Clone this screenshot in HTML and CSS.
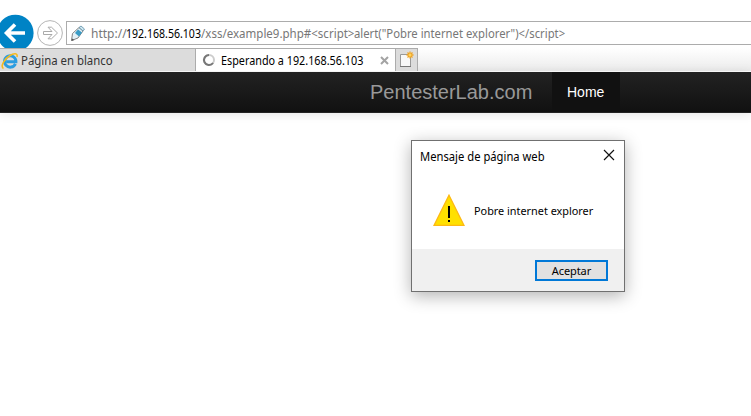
FILE: index.html
```
<!DOCTYPE html>
<html lang="es">
<head>
<meta charset="utf-8">
<title>PentesterLab.com</title>
<link rel="stylesheet" href="styles.css">
</head>
<body>
<header class="toolbar">
  <svg class="nav-buttons" width="66" height="36" viewBox="0 0 66 36">
    <circle cx="15.3" cy="19" r="18.3" fill="#0083c5"/>
    <path d="M25 19H7M15 10.5L6.5 19L15 27.5" fill="none" stroke="#fff" stroke-width="3.6"/>
    <circle cx="50" cy="19" r="12.4" fill="#fff" stroke="#b5b5b5"/>
    <path d="M43.5 17.5H52L48 13.2H51.5L57.5 19L51.500 24.800H48L52 20.500H43.500Z" fill="#fff" stroke="#aaa"/>
  </svg>
  <div class="address">
    <svg class="pencil" width="16" height="18" viewBox="0 0 16 18">
      <path d="M1.500 15.500L2.500 8.500L9 2.500L13 6L8 13Z" fill="#e3f1f7" stroke="#777" stroke-width=".9"/>
      <path d="M5 8L9 11.500L12 7.500L8 4.500Z" fill="#399bc5"/>
      <path d="M9 2.500L11 1L14.500 4L13 6Z" fill="#cde6f0" stroke="#5c8da5" stroke-width=".8"/>
      <path d="M1.500 16L2 13.500L4.500 15Z" fill="#555"/>
    </svg>
    <span class="url"><span class="scheme">http://</span><span class="host">192.168.56.103</span><span class="path">/xss/example9.php#&lt;script&gt;</span><span class="query">alert("Pobre internet explorer")&lt;/script&gt;</span></span>
  </div>
</header>
<div class="tabs">
  <div class="tab">
    <svg width="18" height="18" viewBox="0 0 18 18">
      <path d="M14.4 11.8A5.7 5.7 0 1 1 14.9 9.7H5.2" fill="none" stroke="#2b9de0" stroke-width="3"/>
      <path d="M2.5 16.5C-1 15 3 7 9 3.5C13 .8 17 1 16 5" fill="none" stroke="#f5b91e" stroke-width="1.6"/>
    </svg>
    <span class="label first">Página en blanco</span>
  </div>
  <div class="tab active">
    <svg class="spinner" width="14" height="14" viewBox="0 0 14 14">
      <circle cx="7" cy="7" r="5" fill="none" stroke="#ccc" stroke-width="2"/>
      <path d="M11 10A5 5 0 1 1 7 2" fill="none" stroke="#777" stroke-width="2"/>
    </svg>
    <span class="label second">Esperando a 192.168.56.103</span>
    <svg class="close-tab" width="9" height="9" viewBox="0 0 9 9"><path d="M1 1L8 8M8 1L1 8" stroke="#a3a3a3" stroke-width="2"/></svg>
  </div>
  <div class="new-tab">
    <svg width="20" height="20" viewBox="0 0 20 20">
      <path d="M4.500 5.500H14.500V17.500H4.500Z" fill="#f8f8f8" stroke="#999"/>
      <path d="M4 17.500H15" stroke="#777"/>
      <path d="M14 2.500V9.500M10.500 6H17.500M11.500 3.500L16.500 8.500M16.500 3.500L11.500 8.500" stroke="#f0a322" stroke-width="1.300"/>
      <circle cx="14" cy="6" r="1.500" fill="#ffd35a"/>
    </svg>
  </div>
</div>
<nav class="navbar">
  <span class="brand">PentesterLab.com</span>
  <span class="home">Home</span>
</nav>
<section class="dialog">
  <div class="title"><span class="title-text">Mensaje de página web</span>
    <svg width="12" height="12" viewBox="0 0 12 12"><path d="M1 1L11 11M11 1L1 11" stroke="#111" stroke-width="1.150"/></svg>
  </div>
  <div class="message">
    <svg width="32" height="33" viewBox="0 0 32 33">
      <path d="M16 1.200L31 31.400H1Z" fill="#ffe000" stroke="#fdb913" stroke-width="1.300"/>
      <path d="M15 12H17V24H15ZM15 26H17V28H15Z" fill="#000"/>
    </svg>
    <span class="message-text">Pobre internet explorer</span>
  </div>
  <div class="actions"><button class="accept"><span>Aceptar</span></button></div>
</section>
</body>
</html>
```

FILE: styles.css
```
* { box-sizing: border-box; }
body {
  margin: 0;
  height: 416px;
  overflow: hidden;
  background: #fff;
  font: 12px/16px "Noto Sans", "Open Sans", sans-serif;
  color: #000;
}
svg { display: block; flex: none; }
span { white-space: nowrap; transform-origin: 0 50%; }
.toolbar { display: flex; height: 48px; padding-top: 14px; overflow: hidden; }
.address {
  display: flex;
  flex: 1;
  height: 24px;
  margin-top: 7px;
  padding: 3px 0 0 3px;
  border: 1px solid #acacac;
  border-right: 0;
}
.url { display: flex; margin-left: 5px; line-height: 18px; color: #777; }
.scheme { width: 35px; }
.host { width: 75px; color: #000; transform: scaleX(.88); }
.path { width: 152.5px; transform: scaleX(.96); }
.query { width: 212px; transform: scaleX(.94); }
.tabs { display: flex; height: 24px; background: linear-gradient(#fff, #ebebeb 23px, #fff 23px); }
.tab {
  display: flex;
  width: 195px;
  height: 23px;
  padding: 3px 0 0 1px;
  background: #dcdcdc;
  border-top: 1px solid #acacac;
}
.active {
  width: 201px;
  padding-left: 6px;
  background: #fff;
  border: 1px solid #acacac;
  border-bottom: 0;
}
.label { line-height: 17px; }
.first { margin-left: 2px; color: #333; transform: scaleX(.947); }
.spinner { margin-top: 1px; }
.second { margin-left: 5px; width: 144px; transform: scaleX(.9); }
.close-tab { margin: 4px 0 0 15px; }
.new-tab {
  width: 22px;
  height: 23px;
  background: #dcdcdc;
  border: 1px solid #acacac;
  border-width: 1px 1px 0 0;
}
.navbar {
  display: flex;
  height: 41px;
  padding-left: 370px;
  background: linear-gradient(#222, #111);
  border-bottom: 1px solid #252525;
  box-shadow: 0 1px 10px rgba(0, 0, 0, .1);
  font-family: "Liberation Sans", Arial, sans-serif;
  line-height: 40px;
}
.brand { width: 182px; font-size: 20px; color: #999; }
.home { width: 68px; padding-left: 15px; background: #111; font-size: 14px; color: #fff; }
.dialog {
  position: absolute;
  left: 411px;
  top: 140px;
  width: 214px;
  height: 152px;
  background: #fff;
  border: 1px solid #707070;
  box-shadow: 0 4px 16px rgba(0, 0, 0, .3);
}
.title { display: flex; justify-content: space-between; height: 53px; padding: 8px 9px 0 8px; }
.title-text { height: 15px; line-height: 15px; transform: scaleX(.935); }
.message { display: flex; height: 55px; padding-left: 21px; font-size: 11px; }
.message-text { height: 16px; margin: 9px 0 0 9px; transform: scaleX(.987); }
.actions { display: flex; justify-content: flex-end; height: 42px; padding: 11px 16px 0 0; background: #f0f0f0; }
.accept {
  width: 73px;
  height: 21px;
  padding: 0;
  border: 2px solid #0078d7;
  background: #e1e1e1;
  font: 11px/16px "Noto Sans", sans-serif;
  letter-spacing: -.1px;
  color: #000;
}
```
